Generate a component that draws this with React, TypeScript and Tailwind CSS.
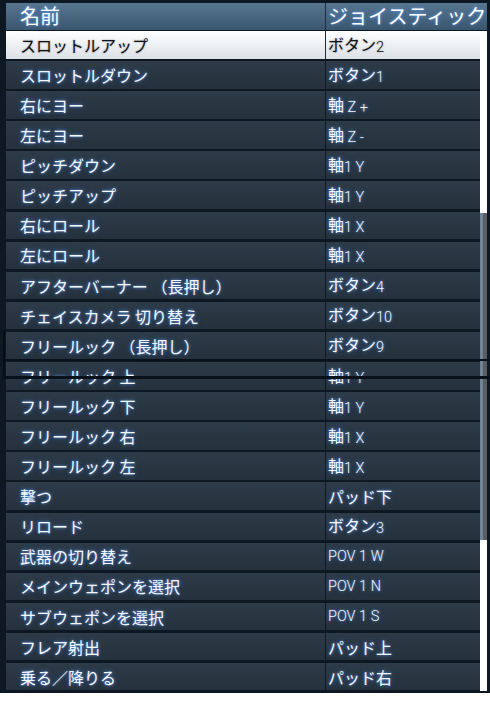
const rows: [string, string][] = [
  ["スロットルアップ", "ボタン2"],
  ["スロットルダウン", "ボタン1"],
  ["右にヨー", "軸 Z +"],
  ["左にヨー", "軸 Z -"],
  ["ピッチダウン", "軸1 Y"],
  ["ピッチアップ", "軸1 Y"],
  ["右にロール", "軸1 X"],
  ["左にロール", "軸1 X"],
  ["アフターバーナー （長押し）", "ボタン4"],
  ["チェイスカメラ 切り替え", "ボタン10"],
  ["フリールック （長押し）", "ボタン9"],
  ["フリールック 上", "軸1 Y"],
  ["フリールック 下", "軸1 Y"],
  ["フリールック 右", "軸1 X"],
  ["フリールック 左", "軸1 X"],
  ["撃つ", "パッド下"],
  ["リロード", "ボタン3"],
  ["武器の切り替え", "POV 1 W"],
  ["メインウェポンを選択", "POV 1 N"],
  ["サブウェポンを選択", "POV 1 S"],
  ["フレア射出", "パッド上"],
  ["乗る／降りる", "パッド右"],
];

// split ascii runs so digits/latin get the thinner face
const Mixed = ({ text }: { text: string }) => {
  const parts = text.match(/[\x20-\x7e]+|[^\x20-\x7e]+/g) || [];
  return (
    <>
      {parts.map((p, i) =>
        /^[\x20-\x7e]+$/.test(p) ? (
          <span key={i} className="font-['Roboto',sans-serif] text-[14.5px] font-light whitespace-pre relative top-[1px]">
            {p}
          </span>
        ) : (
          <span key={i} className="whitespace-pre">{p}</span>
        )
      )}
    </>
  );
};

const glow = "[text-shadow:0_0_3px_rgba(110,170,255,0.85),0_0_7px_rgba(60,130,255,0.4)]";

export default function App() {
  return (
    <div className="w-[490px] h-[720px] bg-white">
      <div className="relative w-[490px] h-[693px] bg-[#0e1823] pt-[3px] pl-[6px] pr-[3px] font-['Noto_Sans_CJK_JP',sans-serif]">
        {/* header */}
        <div className={`flex h-[27px] bg-linear-to-b from-[#58778f] to-[#3a566e] text-white text-[20px] leading-none ${glow}`}>
          <div className="w-[319px] pl-[14px] pt-[3px]">名前</div>
          <div className="w-px bg-[#1c2e3f]" />
          <div className="flex-1 overflow-hidden whitespace-nowrap pl-[2px] pt-[3px]">ジョイスティック</div>
        </div>

        <div className="flex mt-[1px] h-[659.6px]">
          <div className="w-[474px] flex flex-col gap-[2.6px]">
            {rows.map(([name, key], i) => {
              const sel = i === 0;
              return (
                <div
                  key={i}
                  className={`flex h-[27.5px] shrink-0 items-center text-[16px] font-normal leading-none ${
                    sel
                      ? "bg-linear-to-b from-white to-[#dce1e6] text-[#111] [text-shadow:0_0_2px_rgba(0,0,0,0.4)]"
                      : `bg-linear-to-b from-[#2e3b48] to-[#25313c] text-[#f4f8ff] ${glow}`
                  }`}
                >
                  <div className="w-[319px] pl-[14px] whitespace-pre">{name}</div>
                  <div className={`w-px self-stretch ${sel ? "bg-[#1c2a38]" : "bg-[#101b27]"}`} />
                  <div className="flex-1 pl-[2px] flex items-baseline">
                    <Mixed text={key} />
                  </div>
                </div>
              );
            })}
          </div>
          <div className="relative w-[7px] bg-white">
            <div className="absolute left-0 top-[182px] h-[327px] w-[7px] flex">
              <div className="w-[3px] bg-[#6f8495]" />
              <div className="flex-1 bg-[#5a5e63]" />
            </div>
          </div>
        </div>

        {/* redraw glitch across "フリールック 上" */}
        <div className="absolute left-[3px] right-0 top-[359px] h-[2px] bg-[#09111a]" />
        <div className="absolute left-[3px] right-0 top-[376px] h-[3px] bg-[#08101a]" />
        <div className="absolute left-[3px] top-[330px] w-[2px] h-[48px] bg-[#070d14]" />
      </div>
    </div>
  );
}
